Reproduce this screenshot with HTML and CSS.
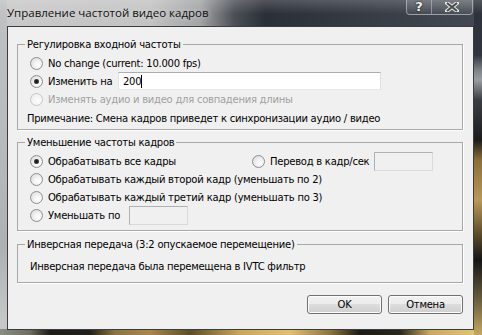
FILE: index.html
```html
<html>
    <head>
        <title>Управление частотой видео кадров</title>
        <link rel="stylesheet" href="styles.css">
    </head>
    <body>
        <div class="window">
            <div class="titlebar">
                <span class="title">Управление частотой видео кадров</span>
                <div class="caption-btns">
                    <span class="cap-btn help">?</span>
                    <span class="cap-btn close">
                        <svg width="14" height="10" viewBox="0 0 14 10">
                            <path d="M2 1 L12 9 M12 1 L2 9" stroke="#e8e8e8" stroke-width="4" stroke-linecap="square"/>
                            <path d="M2 1 L12 9 M12 1 L2 9" stroke="#4a4a4a" stroke-width="2.2"/>
                        </svg>
                    </span>
                </div>
            </div>

            <div class="client">
                <fieldset class="group g-input">
                    <legend>Регулировка входной частоты</legend>
                    <div class="row"><span class="radio"></span><span>No change (current: 10.000 fps)</span></div>
                    <div class="row"><span class="radio checked"></span><span class="lbl lbl-change">Изменить на</span><div class="edit edit-fps">200<span class="caret"></span></div></div>
                    <div class="row tall disabled"><span class="radio"></span><span>Изменять аудио и видео для совпадения длины</span></div>
                    <div class="row tall note">Примечание: Смена кадров приведет к синхронизации аудио / видео</div>
                </fieldset>

                <fieldset class="group g-decimate">
                    <legend>Уменьшение частоты кадров</legend>
                    <div class="row">
                        <div class="opt-all"><span class="radio checked"></span><span>Обрабатывать все кадры</span></div>
                        <span class="radio"></span><span class="lbl lbl-rate">Перевод в кадр/сек</span><div class="edit off"></div>
                    </div>
                    <div class="row"><span class="radio"></span><span>Обрабатывать каждый второй кадр (уменьшать по 2)</span></div>
                    <div class="row"><span class="radio"></span><span>Обрабатывать каждый третий кадр (уменьшать по 3)</span></div>
                    <div class="row"><span class="radio"></span><span class="lbl lbl-by">Уменьшать по</span><div class="edit off"></div></div>
                </fieldset>

                <fieldset class="group g-ivtc">
                    <legend>Инверсная передача (3:2 опускаемое перемещение)</legend>
                    <div class="row plain">Инверсная передача была перемещена в IVTC фильтр</div>
                </fieldset>

                <div class="buttons">
                    <button class="btn">OK</button>
                    <button class="btn">Отмена</button>
                </div>
            </div>
        </div>
    </body>
</html>
```

FILE: styles.css
```css
body {
    margin: 0;
    font-family: "DejaVu Sans", sans-serif;
    font-size: 10px;
    letter-spacing: -0.25px;
    color: #000;
}

/* Aero glass frame, the wallpaper blurred behind it */
.window {
    width: 482px;
    height: 335px;
    display: flex;
    flex-direction: column;
    overflow: hidden;
    background:
        linear-gradient(to bottom, #2d3139 0, #30353d 55px, #7d8288 70px, #9a9ea3 80px, #3a3d42 100px, #1c1c1c 140px, #8a6e3c 160px, #b8985a 200px, #5a4a2a 235px, #151515 260px, #6a5e40 300px, #c4a862 335px) right top / 8px 100% no-repeat,
        linear-gradient(to right, #8a8d86 0, #6e6c5c 30px, #1d1c16 50px, #22201a 90px, #8c7444 115px, #a8884a 150px, #5d4c2c 190px, #c8a85a 240px, #e0c070 290px, #8c7442 330px, #1c1a14 360px, #2a271c 400px, #c8aa60 430px, #e2c878 482px) left bottom / 100% 6px no-repeat,
        linear-gradient(to bottom, #bfc1c2 0, #b9bcbd 120px, #aeb1b2 250px, #c6c8c8 320px) left top / 7px 100% no-repeat,
        linear-gradient(to right, #c9c9c9 0, #c3c3c3 150px, #a3a4a6 200px, #4a4e55 235px, #2b2f37 265px, #363b44 360px, #434852 482px);
}

.titlebar {
    height: 26px;
    display: flex;
    justify-content: space-between;
    align-items: flex-start;
    background: linear-gradient(to bottom, rgba(255,255,255,0.18), rgba(255,255,255,0) 14px);
}

.title {
    padding-left: 7px;
    line-height: 26px;
    font-family: "Open Sans", sans-serif;
    font-size: 11.5px;
    letter-spacing: 0;
    color: #101010;
    text-shadow: 0 0 6px rgba(255,255,255,0.6);
}

.caption-btns {
    display: flex;
    height: 15px;
    margin-right: 9px;
    margin-top: -1px;
    border: 1px solid rgba(210,214,220,0.55);
    border-top: none;
    border-radius: 0 0 4px 4px;
    background: linear-gradient(to bottom, rgba(255,255,255,0.16), rgba(255,255,255,0.04));
}

.cap-btn {
    display: flex;
    align-items: center;
    justify-content: center;
}

.help {
    width: 24px;
    font-family: "DejaVu Sans", sans-serif;
    font-weight: bold;
    font-size: 13px;
    color: #f2f2f2;
    text-shadow: 0 0 2px #222, 0 0 1px #222;
    border-right: 1px solid rgba(210,214,220,0.45);
}

.close {
    width: 40px;
}

/* Client area of the dialog */
.client {
    height: 304px;
    margin: 0 8px 0 7px;
    box-sizing: border-box;
    border: 1px solid #3a3d40;
    background: #f0f0f0;
    padding: 0 10px 0 9px;
    display: flex;
    flex-direction: column;
}

.group {
    margin: 0;
    padding: 0;
    min-width: 0;
    border: 1px solid #a8a8a8;
    box-shadow: 1px 1px 0 #fff;
}

.group legend {
    margin-left: 7px;
    padding: 0 2px;
    line-height: 13px;
}

.g-input {
    margin-top: 11px;
    padding: 3px 0 1px;
}

.g-decimate {
    margin-top: 6px;
    padding: 3px 0 6px;
}

.g-ivtc {
    margin-top: 7px;
    padding: 6px 0 7px;
}

.row {
    height: 18px;
    display: flex;
    align-items: center;
    padding-left: 12px;
    white-space: nowrap;
}

.row.tall {
    height: 19px;
}

.row.note {
    padding-left: 9px;
}

.row.disabled {
    color: #a0a0a0;
}

.opt-all {
    width: 222px;
    display: flex;
    align-items: center;
}

.lbl-change {
    width: 70px;
}

.lbl-rate {
    width: 104px;
}

.lbl-by {
    width: 81px;
}

/* Windows 7 radio button */
.radio {
    flex: none;
    width: 13px;
    height: 13px;
    margin-right: 5px;
    box-sizing: border-box;
    border-radius: 50%;
    border: 1px solid #8d8f91;
    background: radial-gradient(circle at 65% 65%, #ffffff 0, #f4f4f4 35%, #d4d4d4 100%);
}

.radio.checked {
    background:
        radial-gradient(circle, #141414 0, #2a2a2a 1.8px, #8a8a8a 2.6px, rgba(255,255,255,0) 3px),
        radial-gradient(circle at 65% 65%, #ffffff 0, #f4f4f4 35%, #d4d4d4 100%);
}

.disabled .radio {
    border-color: #c4c6c8;
    background: radial-gradient(circle at 65% 65%, #fcfcfc 0, #f2f2f2 60%, #e6e6e6 100%);
}

/* text boxes */
.edit {
    box-sizing: border-box;
    height: 18px;
    border: 1px solid;
    border-color: #abadb3 #dbdfe6 #e3e9ef #e2e3ea;
    background: #fff;
    padding-left: 4px;
    display: flex;
    align-items: center;
}

.edit-fps {
    width: 263px;
}

.edit.off {
    width: 59px;
    height: 19px;
    background: #f0f0f0;
    border-color: #adb2b5 #dadada #dadada #adb2b5;
}

.caret {
    width: 1px;
    height: 13px;
    background: #000;
}

.row.plain {
    height: 18px;
}

.buttons {
    margin-top: 12px;
    display: flex;
    justify-content: flex-end;
    gap: 6px;
}

.btn {
    width: 75px;
    height: 19px;
    padding: 0;
    font-family: "DejaVu Sans", sans-serif;
    font-size: 10px;
    letter-spacing: -0.25px;
    color: #000;
    border: 1px solid #707070;
    border-radius: 3px;
    box-shadow: inset 0 0 0 1px #fcfcfc;
    background: linear-gradient(to bottom, #f2f2f2 0, #ebebeb 50%, #dddddd 50%, #cfcfcf 100%);
}
```
